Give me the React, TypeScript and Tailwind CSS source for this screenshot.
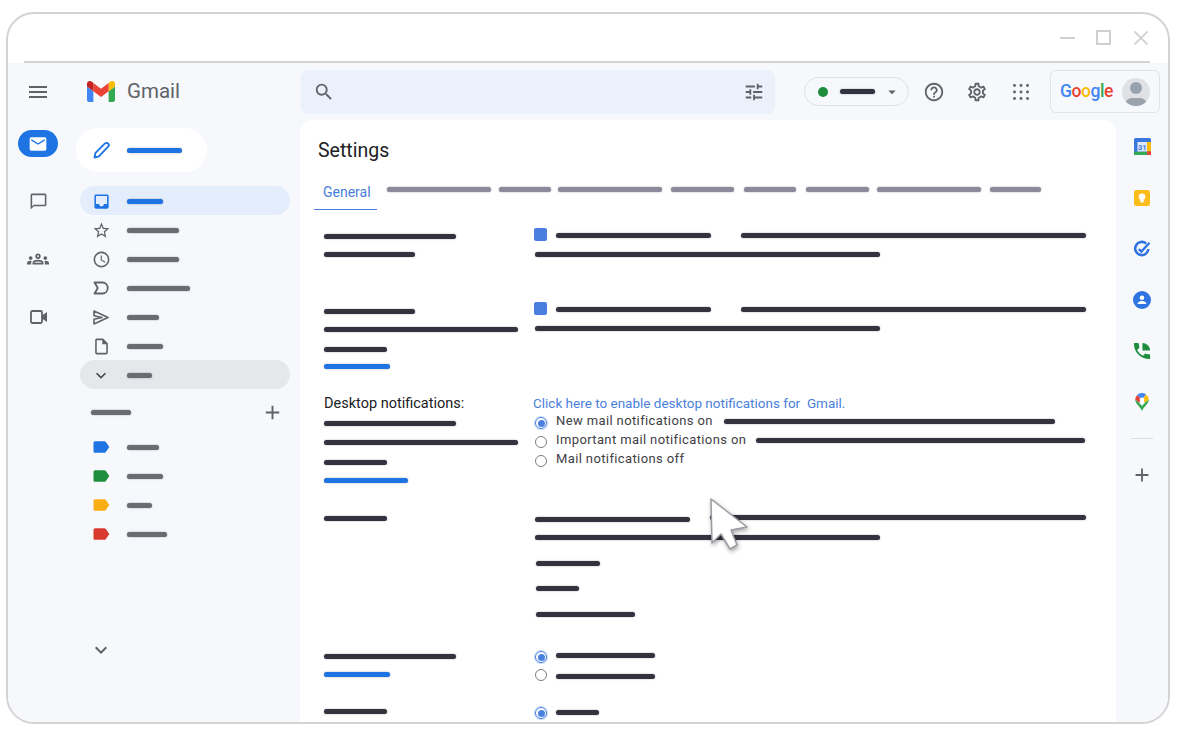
import React from "react";
import {
  MdMenu, MdSearch, MdTune, MdOutlineHelpOutline, MdOutlineSettings, MdMail, MdOutlineChatBubbleOutline,
  MdOutlineGroups, MdInbox, MdStarBorder, MdOutlineWatchLater,
  MdOutlineInsertDriveFile, MdExpandMore, MdAdd, MdLabel, MdArrowDropDown,
} from "react-icons/md";

function Bar({ className }: { className: string }) {
  return <div className={"h-[5px] rounded-full shrink-0 shadow-[0_0_1.5px_rgba(60,60,70,0.6)] " + className} />;
}
function Dark({ className }: { className: string }) {
  return <Bar className={"bg-[#32333f] " + className} />;
}
function Blue({ className }: { className: string }) {
  return <Bar className={"bg-[#1f74e4] " + className} />;
}

function GmailLogo() {
  return (
    <svg width="28" height="21" viewBox="52 42 88 66" className="shrink-0">
      <path fill="#4285f4" d="M58 108h14V74L52 59v43c0 3.32 2.69 6 6 6" />
      <path fill="#34a853" d="M120 108h14c3.32 0 6-2.69 6-6V59l-20 15" />
      <path fill="#fbbc04" d="M120 48v26l20-15v-8c0-7.42-8.47-11.65-14.4-7.2" />
      <path fill="#ea4335" d="M72 74V48l24 18 24-18v26L96 92" />
      <path fill="#c5221f" d="M52 51v8l20 15V48l-5.6-4.2c-5.94-4.45-14.4-.22-14.4 7.2" />
    </svg>
  );
}

function AppsGrid() {
  const pos = [3.5, 10, 16.5];
  return (
    <svg width="20" height="20" viewBox="0 0 20 20" fill="#5f6368">
      {pos.map((y) => pos.map((x) => <circle key={x + "-" + y} cx={x} cy={y} r="1.45" />))}
    </svg>
  );
}

function Checkbox() {
  return <div className="w-[13px] h-[13px] rounded-[2px] bg-[#4a7fe0] shrink-0" />;
}

function Radio({ on }: { on?: boolean }) {
  return on ? (
    <div className="w-[12px] h-[12px] rounded-full border-[1.5px] border-[#4a7fe0] shadow-[0_0_0_1px_#c5d8f8] flex items-center justify-center shrink-0">
      <div className="w-[7px] h-[7px] rounded-full bg-[#4a7fe0]" />
    </div>
  ) : (
    <div className="w-[12px] h-[12px] rounded-full border-[1.5px] border-[#7d7e84] bg-white shrink-0" />
  );
}

function RadioText({ on, label, className }: { on?: boolean; label: string; className: string }) {
  return (
    <div className={"flex items-start " + className}>
      <div className="w-[22px] pl-[1px] pt-[5px] shrink-0"><Radio on={on} /></div>
      <span className="text-[13px] leading-[18px] tracking-[0.38px] text-[#3f4046] whitespace-nowrap">{label}</span>
    </div>
  );
}

function NavRow({ icon, bar, active, more }: { icon: React.ReactNode; bar: string; active?: boolean; more?: boolean }) {
  const bg = active ? "bg-[#e3edfb]" : more ? "bg-[#e6e7ea]" : "";
  return (
    <div className={"ml-[4px] w-[210px] h-[29px] pt-[1px] rounded-full flex items-center pl-[11px] gap-[16px] " + bg}>
      <div className="w-[20px] h-[20px] flex items-center justify-center shrink-0">{icon}</div>
      <Bar className={bar} />
    </div>
  );
}

function LabelRow({ color, bar }: { color: string; bar: string }) {
  return (
    <div className="ml-[4px] w-[210px] h-[29px] pt-[1px] flex items-center pl-[11px] gap-[16px]">
      <div className={"w-[20px] h-[20px] flex items-center justify-center shrink-0 " + color}><MdLabel size={20} /></div>
      <Bar className={bar} />
    </div>
  );
}

function Pencil() {
  return (
    <svg width="18" height="18" viewBox="0 0 18 18" fill="none" stroke="#1f74e4" strokeWidth="1.9" strokeLinejoin="round" className="shrink-0">
      <path d="M1.5 16.5l1-4.6L11.8 2.6c1-1 2.4-1 3.3-.1s.9 2.3 0 3.2L5.9 15.3z" />
    </svg>
  );
}
function ImportantIcon() {
  return (
    <svg width="16" height="14" viewBox="0 0 16 14" fill="none" stroke="#5f6368" strokeWidth="1.8" strokeLinejoin="round">
      <path d="M1.5 1.5h8c3 0 5.2 2.5 5.2 5.5s-2.2 5.5-5.2 5.5h-8L4.8 7z" />
    </svg>
  );
}
function SendIcon() {
  return (
    <svg width="16" height="15" viewBox="0 0 16 15" fill="none" stroke="#5f6368" strokeWidth="1.6" strokeLinejoin="round">
      <path d="M1 1l14 6.5L1 14V9.3l8-1.8-8-1.8z" />
    </svg>
  );
}
function VideoIcon() {
  return (
    <svg width="17" height="14" viewBox="0 0 17 14">
      <rect x="1" y="1" width="11" height="12" rx="1.5" fill="none" stroke="#5f6368" strokeWidth="1.8" />
      <path d="M12 5.5L17 2v10l-5-3.5z" fill="#5f6368" />
    </svg>
  );
}

function CalendarIcon() {
  return (
    <svg width="17" height="17" viewBox="0 0 17 17">
      <rect width="17" height="17" rx="1.5" fill="#3a78e0" />
      <rect x="13" y="4" width="4" height="9.5" fill="#fbbc04" />
      <rect y="13.5" width="13" height="3.5" fill="#34a853" />
      <rect x="13" y="13.5" width="4" height="3.5" fill="#ea4335" />
      <rect x="3.5" y="4" width="9.5" height="9.5" fill="#dfe8f9" />
      <text x="8.2" y="11.8" fontSize="7.5" fontWeight="700" textAnchor="middle" fill="#3a78dd" fontFamily="Roboto, sans-serif">31</text>
    </svg>
  );
}
function KeepIcon() {
  return (
    <svg width="16" height="16" viewBox="0 0 16 16">
      <rect width="16" height="16" rx="2.5" fill="#fbbc1c" />
      <circle cx="8" cy="6.8" r="3.3" fill="#fff" />
      <rect x="6.3" y="10" width="3.4" height="2.4" rx="0.6" fill="#fff" />
    </svg>
  );
}
function TasksIcon() {
  return (
    <svg width="18" height="18" viewBox="0 0 18 18" fill="none" stroke="#2f74e0">
      <path d="M13.2 3.6A6.6 6.6 0 1 0 15.4 9" strokeWidth="2.6" />
      <path d="M5.8 9.2l2.6 2.4L16.5 2.8" strokeWidth="2.4" />
    </svg>
  );
}
function ContactsIcon() {
  return (
    <svg width="18" height="18" viewBox="0 0 18 18">
      <circle cx="9" cy="9" r="9" fill="#2f74e0" />
      <circle cx="9" cy="6.7" r="2.3" fill="#fff" />
      <path d="M4.6 13c0-2 2.2-3 4.4-3s4.4 1 4.4 3z" fill="#fff" />
    </svg>
  );
}
function CallIcon() {
  return (
    <svg width="18" height="18" viewBox="2 2 20 20" fill="#1e8e3e">
      <path d="M6.62 10.79c1.44 2.83 3.76 5.14 6.59 6.59l2.2-2.2c.27-.27.67-.36 1.02-.24 1.12.37 2.33.57 3.57.57.55 0 1 .45 1 1V20c0 .55-.45 1-1 1-9.39 0-17-7.61-17-17 0-.55.45-1 1-1h3.5c.55 0 1 .45 1 1 0 1.25.2 2.45.57 3.57.11.35.03.74-.25 1.02l-2.2 2.2z" />
      <path d="M12.5 3a8.5 8.5 0 0 1 8.5 8.5h-8.5z" />
    </svg>
  );
}
function MapsIcon() {
  return (
    <svg width="14" height="18" viewBox="0 0 14 18">
      <path d="M7 18C5.5 14 0.2 11 0.2 6.6L4 9.6 7 13l3 -3.4 3.8-3C13.8 11 8.5 14 7 18z" fill="#34a853" />
      <path d="M0.2 6.6A6.8 6.8 0 0 1 2.2 2L7 6.8 4 9.6z" fill="#ea4335" />
      <path d="M2.2 2A6.8 6.8 0 0 1 11 1.4L7 6.8z" fill="#4285f4" />
      <path d="M11 1.4A6.8 6.8 0 0 1 13.8 6.6L10 9.6 7 6.8z" fill="#fbbc04" />
      <circle cx="7" cy="6.8" r="2.4" fill="#fff" />
    </svg>
  );
}

function Cursor() {
  return (
    <svg width="60" height="70" viewBox="700 490 60 70" className="absolute left-[692px] top-[476px] drop-shadow-[1px_2px_2px_rgba(0,0,0,0.35)]">
      <path d="M711 499 L747 527 L731 530 L737 545 L730 549 L721 534 L712 543 Z" fill="#fff" stroke="#9a9ba0" strokeWidth="1.5" strokeLinejoin="round" />
    </svg>
  );
}

const tabs = [
  "w-[104px] ml-[10px]", "w-[52px] ml-[8px]", "w-[104px] ml-[7px]", "w-[63px] ml-[9px]",
  "w-[52px] ml-[10px]", "w-[63px] ml-[10px]", "w-[104px] ml-[8px]", "w-[51px] ml-[9px]",
];

export default function App() {
  const gray = "bg-[#696c73]";
  return (
    <div className="w-[1182px] h-[736px] bg-white pt-[12px] pl-[6px] font-['Roboto',sans-serif] overflow-hidden">
      <div className="relative w-[1164px] h-[712px] border-2 border-[#d3d3d3] rounded-[28px] overflow-hidden bg-white flex flex-col">
        {/* title bar */}
        <div className="h-[47px] flex items-center justify-end pr-[20px] shrink-0">
          <div className="w-[15px] h-[2px] bg-[#cfcfcf]" />
          <div className="w-[15px] h-[15px] border-2 border-[#cfcfcf] ml-[21px]" />
          <svg width="14" height="14" viewBox="0 0 14 14" className="ml-[23px]" stroke="#cfcfcf" strokeWidth="1.8">
            <path d="M0.5 0.5l13 13M13.5 0.5l-13 13" />
          </svg>
        </div>
        <div className="h-[2px] bg-[#d3d3d3] ml-[16px] mr-[18px] shrink-0" />

        <div className="flex-1 min-h-0 bg-[#f6f8fc] flex flex-col">
          {/* header */}
          <div className="h-[57px] flex items-center shrink-0">
            <div className="w-[68px] pl-[18px] text-[#5f6368] shrink-0"><MdMenu size={24} /></div>
            <div className="w-[225px] pl-[11px] flex items-center gap-[12px] shrink-0">
              <GmailLogo />
              <span className="text-[20.5px] text-[#5f6368]">Gmail</span>
            </div>
            <div className="w-[474px] h-[44px] rounded-[8px] bg-[#eaf1fb] flex items-center justify-between pl-[12px] pr-[10px] text-[#5f6368] shrink-0">
              <MdSearch size={22} />
              <MdTune size={22} />
            </div>
            <div className="ml-[29px] w-[105px] h-[29px] rounded-full border border-[#dde1e8] flex items-center pl-[13px] shrink-0">
              <div className="w-[10px] h-[10px] rounded-full bg-[#1e8e3e]" />
              <Bar className="w-[35px] bg-[#32333f] ml-[12px]" />
              <MdArrowDropDown size={18} className="text-[#5f6368] ml-[8px]" />
            </div>
            <div className="ml-[14px] w-[22px] text-[#5f6368] shrink-0"><MdOutlineHelpOutline size={22} /></div>
            <div className="ml-[21px] w-[22px] text-[#5f6368] shrink-0"><MdOutlineSettings size={22} /></div>
            <div className="ml-[23px] w-[20px] shrink-0"><AppsGrid /></div>
            <div className="ml-[19px] w-[110px] h-[43px] rounded-[6px] border border-[#dfe3ea] flex items-center pl-[9px] shrink-0">
              <span className="text-[17.5px] font-medium tracking-[-0.45px]">
                <span className="text-[#4285f4]">G</span><span className="text-[#ea4335]">o</span><span className="text-[#fbbc04]">o</span><span className="text-[#4285f4]">g</span><span className="text-[#34a853]">l</span><span className="text-[#ea4335]">e</span>
              </span>
              <div className="ml-auto mr-[9px] relative w-[28px] h-[28px] rounded-full bg-[#dfe1e5] overflow-hidden shrink-0">
                <div className="mx-auto mt-[4px] w-[12px] h-[12px] rounded-full bg-[#9aa3ad]" />
                <div className="mx-auto mt-[4px] w-[22px] h-[14px] rounded-full bg-[#9aa3ad]" />
              </div>
            </div>
          </div>

          {/* content */}
          <div className="flex-1 min-h-0 flex">
            {/* rail */}
            <div className="w-[68px] pr-[8px] pt-[10px] flex flex-col items-center text-[#5f6368] shrink-0">
              <div className="w-[40px] h-[27px] rounded-full bg-[#1f74e4] flex items-center justify-center text-white mb-[15px]">
                <MdMail size={20} />
              </div>
              <div className="h-[58px] flex items-center"><MdOutlineChatBubbleOutline size={19} /></div>
              <div className="h-[58px] flex items-center"><MdOutlineGroups size={22} /></div>
              <div className="h-[58px] flex items-center"><VideoIcon /></div>
            </div>

            {/* sidebar */}
            <div className="w-[224px] pt-[8px] flex flex-col shrink-0">
              <div className="w-[131px] h-[44px] rounded-full bg-white flex items-center pl-[17px] gap-[16px] mb-[14px]">
                <Pencil />
                <Blue className="w-[55px]" />
              </div>
              <NavRow active icon={<MdInbox size={19} className="text-[#1f74e4]" />} bar="w-[36px] bg-[#1f74e4]" />
              <NavRow icon={<MdStarBorder size={19} className="text-[#5f6368]" />} bar={"w-[52px] " + gray} />
              <NavRow icon={<MdOutlineWatchLater size={19} className="text-[#5f6368]" />} bar={"w-[52px] " + gray} />
              <NavRow icon={<ImportantIcon />} bar={"w-[63px] " + gray} />
              <NavRow icon={<SendIcon />} bar={"w-[32px] " + gray} />
              <NavRow icon={<MdOutlineInsertDriveFile size={19} className="text-[#5f6368]" />} bar={"w-[36px] " + gray} />
              <NavRow more icon={<MdExpandMore size={21} className="text-[#45474d]" />} bar={"w-[25px] " + gray} />
              <div className="mt-[11px] h-[24px] flex items-center justify-between pl-[15px] pr-[6px] w-[214px]">
                <Bar className={"w-[40px] " + gray} />
                <MdAdd size={23} className="text-[#5f6368]" />
              </div>
              <div className="mt-[8px]">
                <LabelRow color="text-[#1f74e4]" bar={"w-[32px] " + gray} />
                <LabelRow color="text-[#1e8e3e]" bar={"w-[36px] " + gray} />
                <LabelRow color="text-[#fbad14]" bar={"w-[25px] " + gray} />
                <LabelRow color="text-[#d93a30]" bar={"w-[40px] " + gray} />
              </div>
              <div className="mt-[90px] pl-[13px] text-[#5f6368]"><MdExpandMore size={24} /></div>
            </div>

            {/* card */}
            <div className="w-[816px] bg-white rounded-t-[14px] pt-[18px] shrink-0">
              <div className="pl-[18px] text-[19.5px] leading-[26px] text-[#202124]">Settings</div>
              <div className="mt-[11px] pl-[14px] flex items-start">
                <div className="w-[63px] h-[35px] border-b border-[#4a80dc] pl-[9px] pt-[9px] text-[14px] leading-[16px] text-[#4a80dc]">General</div>
                {tabs.map((t) => (
                  <Bar key={t} className={"mt-[12px] bg-[#8a8a9c] " + t} />
                ))}
              </div>

              <div className="mt-[18px] pl-[24px]">
                {/* row 1 */}
                <div className="h-[74px] flex">
                  <div className="w-[210px] pt-[6px]">
                    <Dark className="w-[132px]" />
                    <Dark className="w-[91px] mt-[13px]" />
                  </div>
                  <div>
                    <div className="h-[13px] flex items-center">
                      <Checkbox />
                      <Dark className="w-[155px] ml-[9px] mt-[2px]" />
                      <Dark className="w-[345px] ml-[30px] mt-[2px]" />
                    </div>
                    <Dark className="w-[345px] mt-[11px] ml-[1px]" />
                  </div>
                </div>
                {/* row 2 */}
                <div className="h-[93px] flex">
                  <div className="w-[210px] pt-[7px]">
                    <Dark className="w-[91px]" />
                    <Dark className="w-[194px] mt-[13px]" />
                    <Dark className="w-[63px] mt-[15px]" />
                    <Blue className="w-[66px] mt-[12px]" />
                  </div>
                  <div>
                    <div className="h-[13px] flex items-center">
                      <Checkbox />
                      <Dark className="w-[155px] ml-[9px] mt-[2px]" />
                      <Dark className="w-[345px] ml-[30px] mt-[2px]" />
                    </div>
                    <Dark className="w-[345px] mt-[11px] ml-[1px]" />
                  </div>
                </div>
                {/* row 3 */}
                <div className="h-[117px] flex">
                  <div className="w-[210px] pt-[1px]">
                    <div className="text-[14.5px] leading-[16px] text-[#202124] whitespace-nowrap">Desktop notifications:</div>
                    <Dark className="w-[132px] mt-[9px]" />
                    <Dark className="w-[194px] mt-[14px]" />
                    <Dark className="w-[63px] mt-[15px]" />
                    <Blue className="w-[84px] mt-[13px]" />
                  </div>
                  <div>
                    <div className="text-[13.5px] leading-[16px] text-[#4a80dc] whitespace-pre -ml-[1px]">Click here to enable desktop notifications for  Gmail.</div>
                    <div className="flex items-center mt-[1px]">
                      <RadioText on label="New mail notifications on" className="h-[18px]" />
                      <Dark className="w-[331px] ml-[11px]" />
                    </div>
                    <div className="flex items-center mt-[1px]">
                      <RadioText label="Important mail notifications on" className="h-[18px]" />
                      <Dark className="w-[329px] ml-[10px]" />
                    </div>
                    <RadioText label="Mail notifications off" className="h-[18px] mt-[1px]" />
                  </div>
                </div>
                {/* row 4 */}
                <div className="h-[138px] flex">
                  <div className="w-[210px] pt-[4px]">
                    <Dark className="w-[63px]" />
                  </div>
                  <div className="pl-[1px]">
                    <div className="flex items-start">
                      <Dark className="w-[155px] mt-[5px]" />
                      <Dark className="w-[376px] ml-[20px] mt-[3px]" />
                    </div>
                    <Dark className="w-[345px] mt-[13px]" />
                    <Dark className="w-[64px] mt-[21px] ml-[1px]" />
                    <Dark className="w-[43px] mt-[20px] ml-[1px]" />
                    <Dark className="w-[99px] mt-[21px] ml-[1px]" />
                  </div>
                </div>
                {/* row 5 */}
                <div className="h-[56px] flex">
                  <div className="w-[210px] pt-[4px]">
                    <Dark className="w-[132px]" />
                    <Blue className="w-[66px] mt-[13px]" />
                  </div>
                  <div className="pl-[1px] pt-[1px]">
                    <div className="flex items-center h-[12px]">
                      <Radio on />
                      <Dark className="w-[99px] ml-[9px] -mt-[3px]" />
                    </div>
                    <div className="flex items-center h-[12px] mt-[6px]">
                      <Radio />
                      <Dark className="w-[99px] ml-[9px] mt-[2px]" />
                    </div>
                  </div>
                </div>
                {/* row 6 */}
                <div className="flex">
                  <div className="w-[210px] pt-[3px]">
                    <Dark className="w-[63px]" />
                  </div>
                  <div className="pl-[1px] pt-[1px]">
                    <div className="flex items-center h-[12px]">
                      <Radio on />
                      <Dark className="w-[43px] ml-[9px] -mt-[1px]" />
                    </div>
                  </div>
                </div>
              </div>
            </div>

            {/* right rail */}
            <div className="w-[52px] pt-[1px] flex flex-col items-center shrink-0">
              <div className="h-[51px] flex items-center"><CalendarIcon /></div>
              <div className="h-[51px] flex items-center"><KeepIcon /></div>
              <div className="h-[51px] flex items-center"><TasksIcon /></div>
              <div className="h-[51px] flex items-center"><ContactsIcon /></div>
              <div className="h-[51px] flex items-center"><CallIcon /></div>
              <div className="h-[51px] flex items-center"><MapsIcon /></div>
              <div className="mt-[11px] w-[22px] h-[1px] bg-[#dcdde0]" />
              <div className="mt-[25px] text-[#5f6368]"><MdAdd size={22} /></div>
            </div>
          </div>
        </div>

        <Cursor />
      </div>
    </div>
  );
}
